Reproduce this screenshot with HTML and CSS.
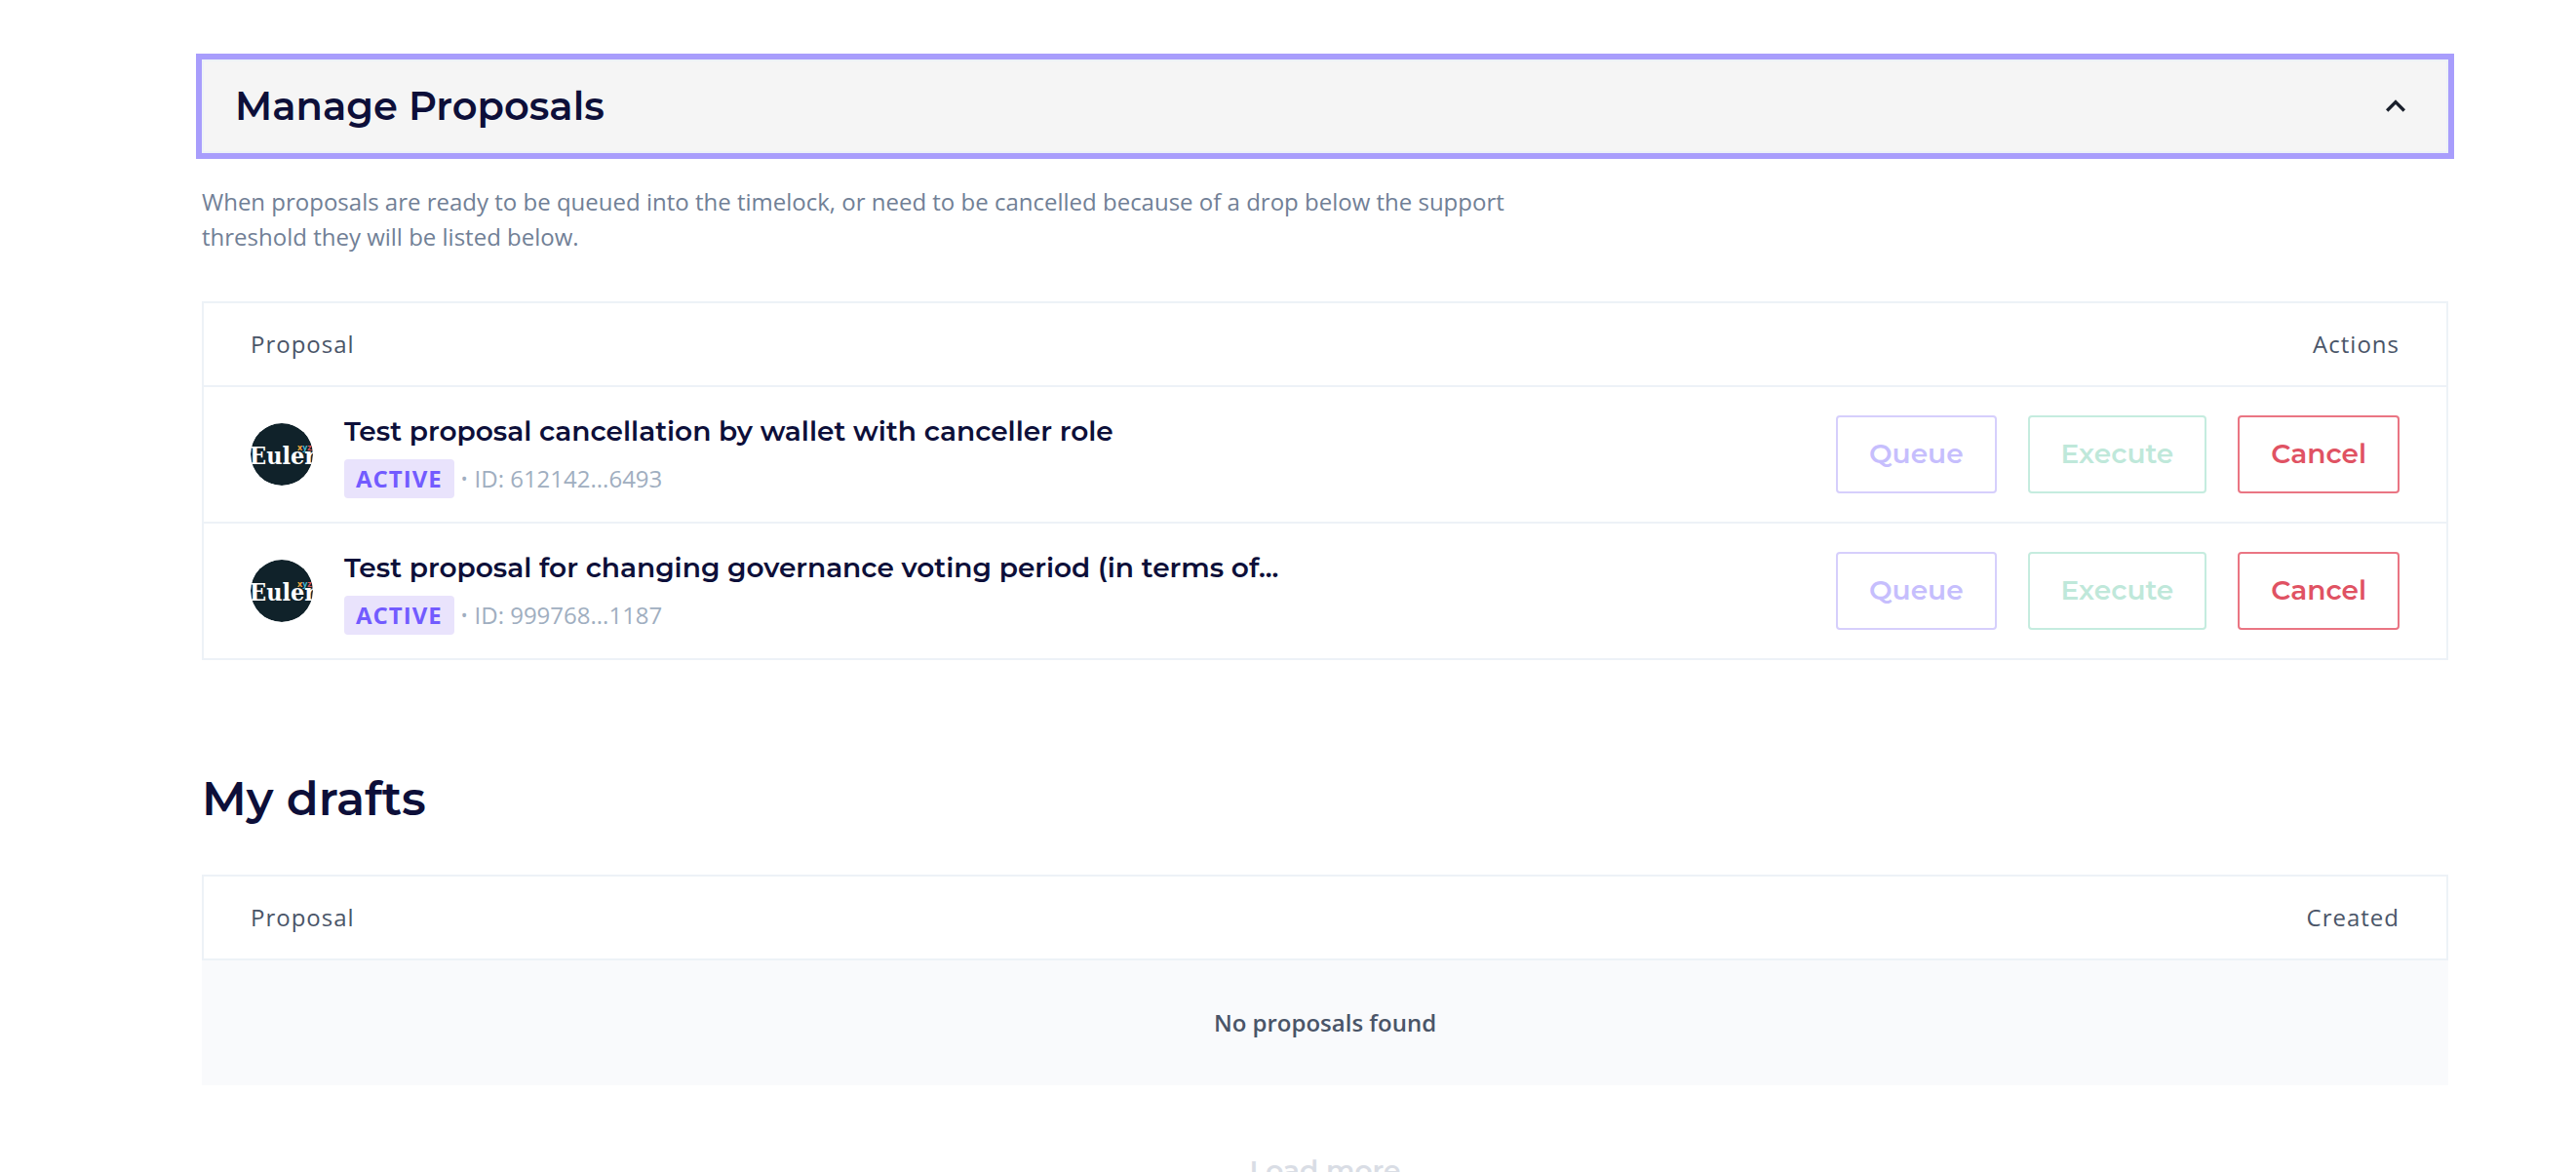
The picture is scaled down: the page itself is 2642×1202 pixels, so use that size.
FILE: index.html
```html
<!DOCTYPE html>
<html lang="en">
<head>
<meta charset="utf-8">
<meta name="viewport" content="width=device-width, initial-scale=1">
<title>Manage Proposals</title>
<link rel="stylesheet" href="styles.css">
</head>
<body>
<main class="page">
  <section class="manage">
    <h2 class="accordion-heading">
      <button class="accordion-button" type="button" aria-expanded="true" aria-controls="manage-panel">
        <span>Manage Proposals</span>
        <svg class="accordion-icon" viewBox="0 0 24 24" aria-hidden="true"><path d="M7.41 15.41 12 10.83l4.59 4.58L18 14l-6-6-6 6z"/></svg>
      </button>
    </h2>
    <div id="manage-panel">
      <p class="description">When proposals are ready to be queued into the timelock, or need to be cancelled because of a drop below the support threshold they will be listed below.</p>
      <table class="table">
        <thead>
          <tr><th scope="col">Proposal</th><th scope="col" class="end">Actions</th></tr>
        </thead>
        <tbody>
          <tr>
            <td>
              <div class="proposal">
                <svg class="avatar" viewBox="0 0 64 64" role="img" aria-label="Euler">
                  <circle cx="32" cy="32" r="32" fill="#10222a"/>
                  <text class="logo-name" x="-1" y="42">Euler</text>
                  <text class="logo-suffix" x="48" y="28"><tspan fill="#f0a63c">x</tspan><tspan fill="#45b8d0">y</tspan><tspan fill="#e0565b">z</tspan></text>
                </svg>
                <div class="summary">
                  <a class="title" href="#612142">Test proposal cancellation by wallet with canceller role</a>
                  <div class="meta"><span class="badge">ACTIVE</span><span class="dot">•</span><span class="id">ID: 612142...6493</span></div>
                </div>
              </div>
            </td>
            <td>
              <div class="actions">
                <button class="button queue" type="button" disabled>Queue</button>
                <button class="button execute" type="button" disabled>Execute</button>
                <button class="button cancel" type="button">Cancel</button>
              </div>
            </td>
          </tr>
          <tr>
            <td>
              <div class="proposal">
                <svg class="avatar" viewBox="0 0 64 64" role="img" aria-label="Euler">
                  <circle cx="32" cy="32" r="32" fill="#10222a"/>
                  <text class="logo-name" x="-1" y="42">Euler</text>
                  <text class="logo-suffix" x="48" y="28"><tspan fill="#f0a63c">x</tspan><tspan fill="#45b8d0">y</tspan><tspan fill="#e0565b">z</tspan></text>
                </svg>
                <div class="summary">
                  <a class="title" href="#999768">Test proposal for changing governance voting period (in terms of...</a>
                  <div class="meta"><span class="badge">ACTIVE</span><span class="dot">•</span><span class="id">ID: 999768...1187</span></div>
                </div>
              </div>
            </td>
            <td>
              <div class="actions">
                <button class="button queue" type="button" disabled>Queue</button>
                <button class="button execute" type="button" disabled>Execute</button>
                <button class="button cancel" type="button">Cancel</button>
              </div>
            </td>
          </tr>
        </tbody>
      </table>
    </div>
  </section>
  <section class="drafts">
    <h2 class="section-title">My drafts</h2>
    <table class="table">
      <thead>
        <tr><th scope="col">Proposal</th><th scope="col" class="end">Created</th></tr>
      </thead>
    </table>
    <p class="empty">No proposals found</p>
    <button class="load-more" type="button" disabled>Load more</button>
  </section>
</main>
</body>
</html>
```
FILE: styles.css
```css
:root {
  --heading: Montserrat, Inter, sans-serif;
  --body: "Open Sans", sans-serif;
  --line: #edf2f7;
  --ink: #0d0f39;
}

* {
  box-sizing: border-box;
}

body {
  margin: 0;
  height: 100vh;
  overflow: hidden;
  background: #fff;
  color: #4a5568;
  font: 24px/36px var(--body);
}

h2,
p {
  margin: 0;
}

button {
  font-family: var(--heading);
  font-weight: 600;
}

.page {
  padding: 61px 131px 0 207px;
}

.accordion-heading {
  display: flex;
}

.accordion-button {
  display: flex;
  flex: 1;
  align-items: center;
  justify-content: space-between;
  height: 96px;
  padding: 0 32px;
  border: 2px solid var(--line);
  outline: 6px solid #a89dfc;
  background: #f5f5f5;
  color: var(--ink);
  font-size: 40px;
  line-height: 48px;
}

.accordion-icon {
  width: 40px;
  height: 40px;
  fill: #1a202c;
}

.description {
  max-width: 1344px;
  margin: 32px 0 48px;
  color: #718096;
}

.table {
  width: 100%;
  border: 2px solid var(--line);
  border-collapse: collapse;
}

.table tr {
  border: 2px solid var(--line);
}

.table th {
  height: 86px;
  padding: 0 48px;
  font-weight: 400;
  letter-spacing: 1px;
  text-align: left;
}

.table .end {
  text-align: right;
}

.table td {
  height: 140px;
  padding: 0 48px;
}

.proposal {
  display: flex;
  align-items: center;
  gap: 32px;
}

.avatar {
  width: 64px;
  height: 64px;
  border-radius: 50%;
  overflow: hidden;
}

.logo-name {
  fill: #fff;
  font: bold 25px "DejaVu Serif Condensed", "Liberation Serif", serif;
}

.logo-suffix {
  font: bold 9px var(--body);
}

.summary {
  display: flex;
  flex-direction: column;
  gap: 8px;
}

.title {
  color: var(--ink);
  font: 600 28px/42px var(--heading);
  text-decoration: none;
}

.meta {
  display: flex;
  align-items: center;
  gap: 7px;
  color: #a0aec0;
  line-height: 40px;
}

.badge {
  padding: 0 12px;
  border-radius: 4px;
  background: #e9e3fc;
  color: #725bff;
  font-weight: 700;
  letter-spacing: 1px;
}

.dot {
  font-size: 18px;
}

.actions {
  display: flex;
  justify-content: flex-end;
  gap: 32px;
}

.button {
  height: 80px;
  padding: 0 32px 2px;
  border: 2px solid;
  border-radius: 4px;
  background: #fff;
  font-size: 28px;
}

.queue {
  border-color: #d6cffc;
  color: #c6befd;
}

.execute {
  border-color: #c5ecdf;
  color: #bfe8da;
}

.cancel {
  border-color: #ea7583;
  color: #e05263;
}

.section-title {
  margin: 110px 0 46px;
  color: var(--ink);
  font: 600 48px/64px var(--heading);
}

.empty {
  padding: 46px 0;
  background: #f9fafc;
  font-weight: 600;
  text-align: center;
}

.load-more {
  display: block;
  height: 80px;
  margin: 48px auto 0;
  padding: 0 32px 2px;
  border: 0;
  background: none;
  color: #d9dde5;
  font-size: 28px;
}
```
